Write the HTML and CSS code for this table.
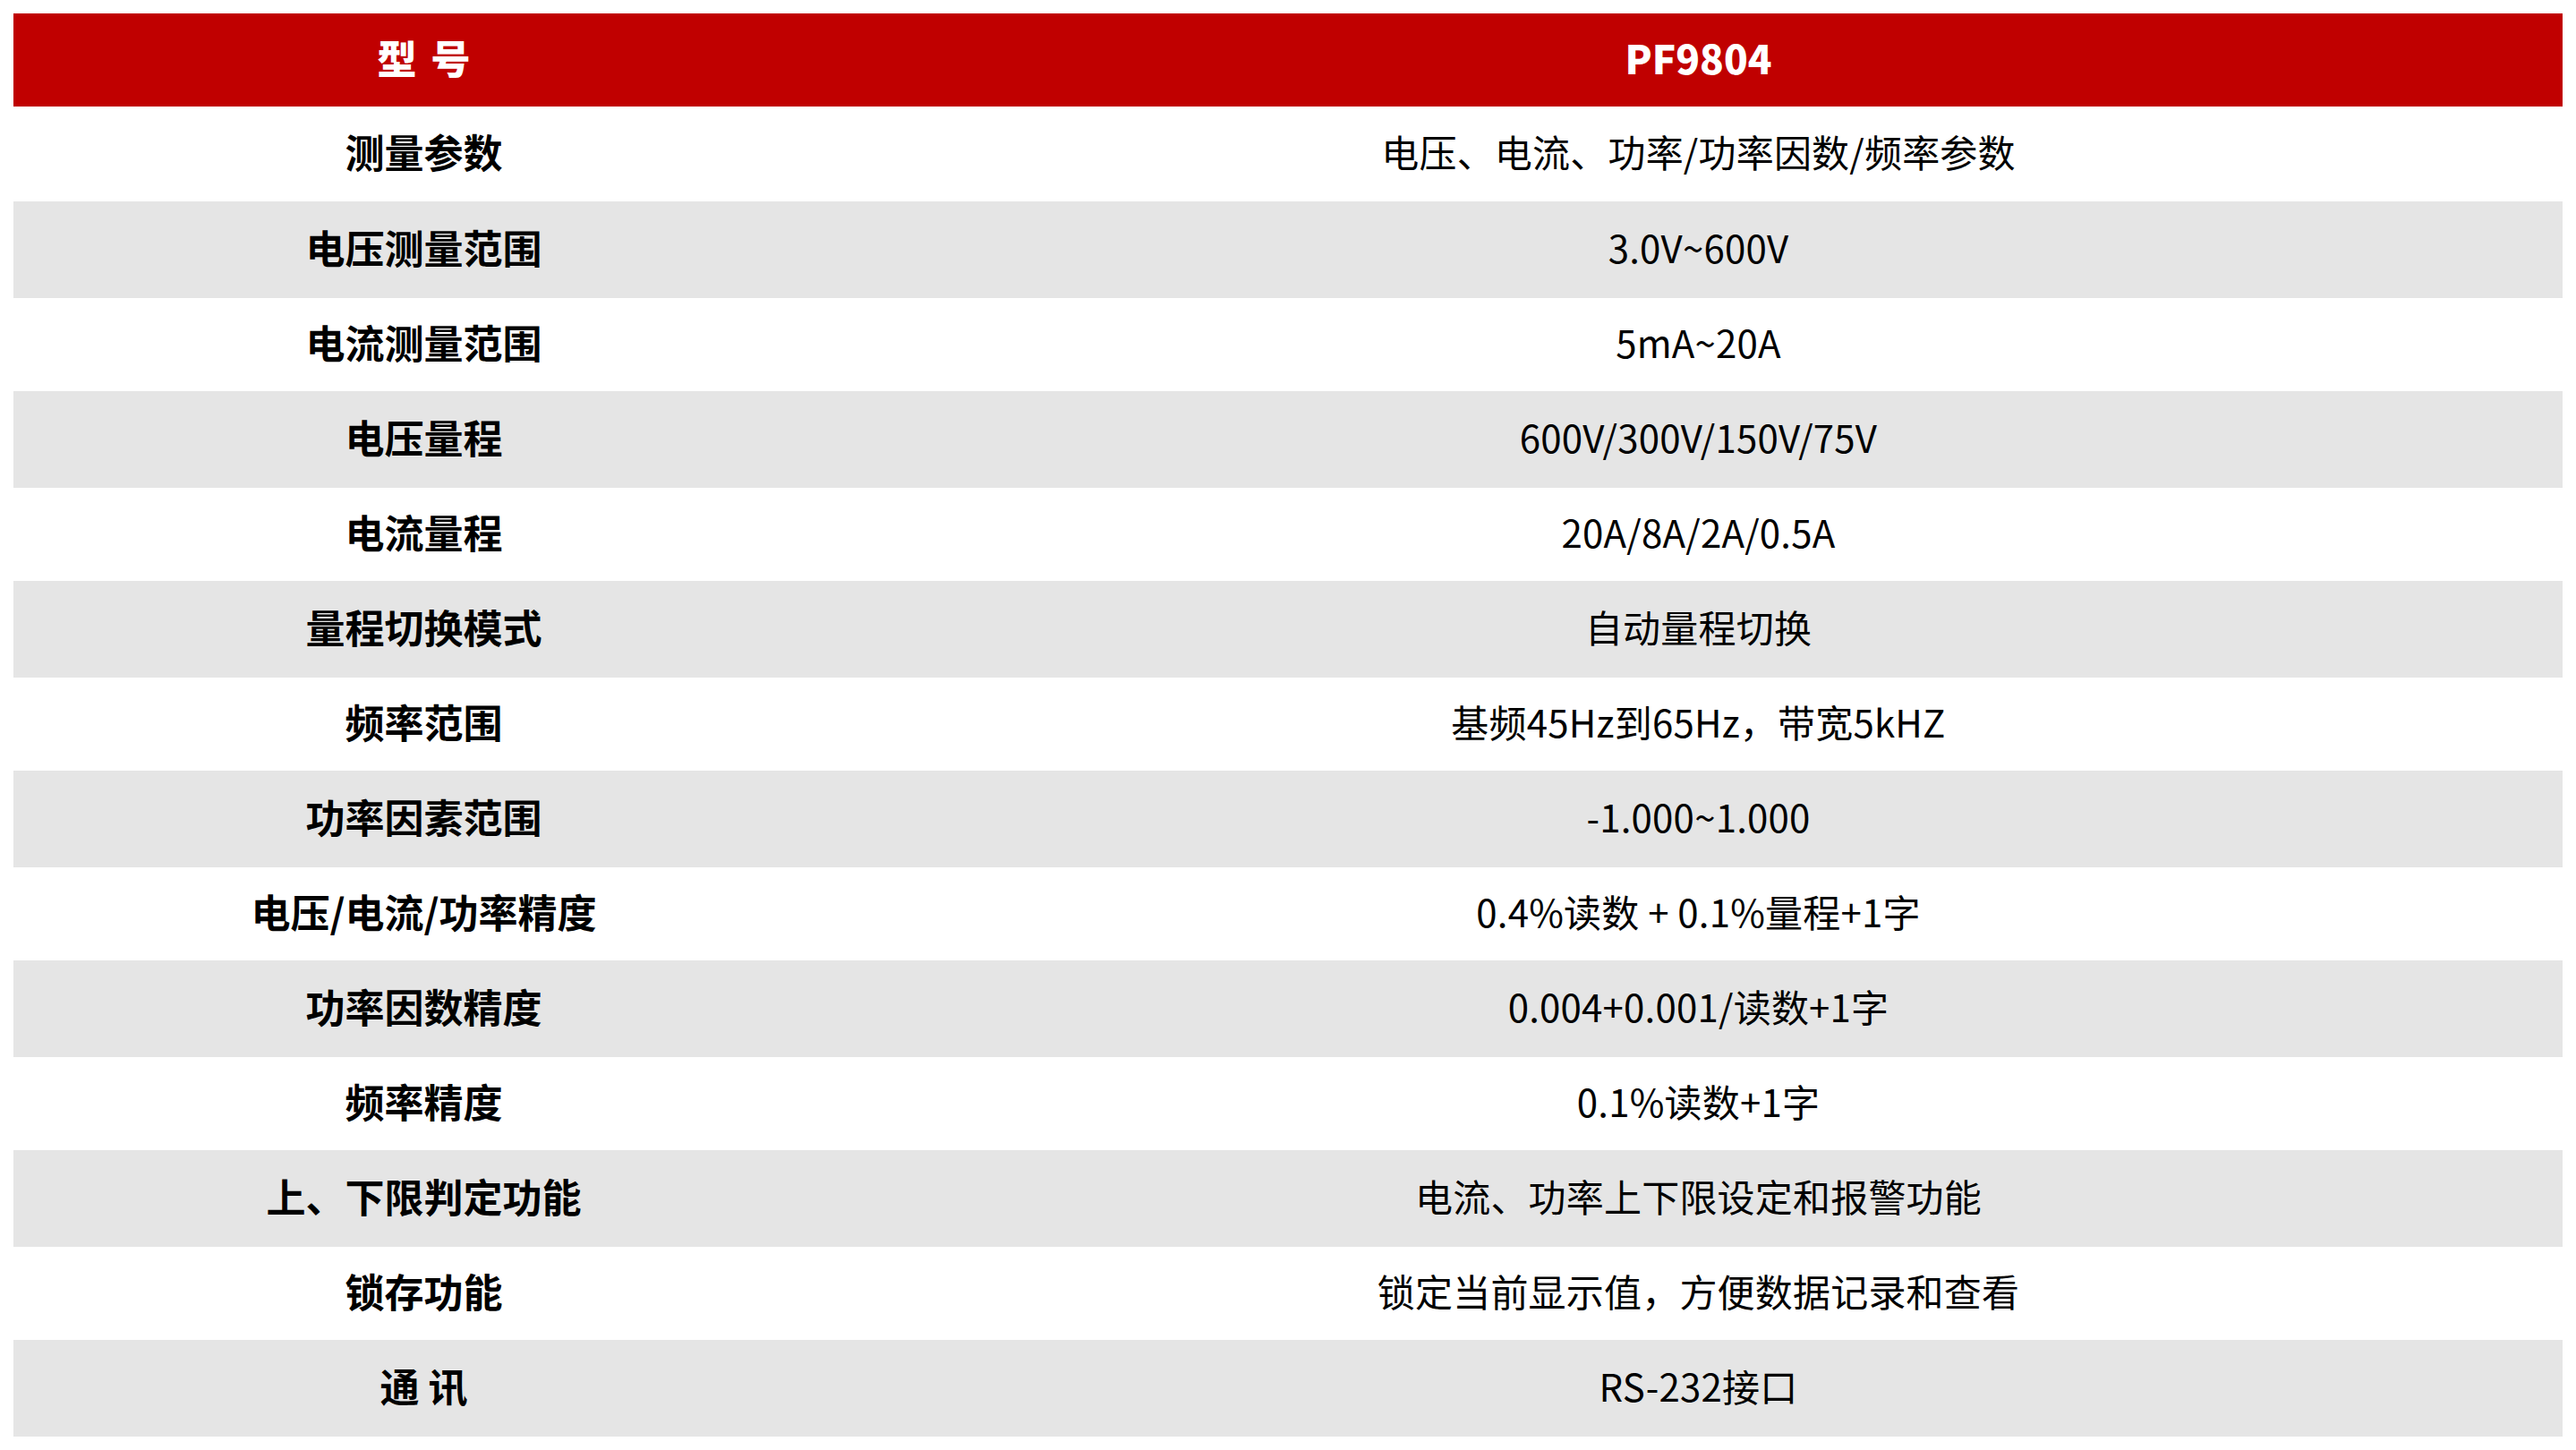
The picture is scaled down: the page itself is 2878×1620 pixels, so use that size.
FILE: index.html
```html
<!DOCTYPE html>
<html lang="zh-CN">
<head>
<meta charset="utf-8">
<title>PF9804 参数</title>
<link rel="stylesheet" href="styles.css">
</head>
<body>
<table class="spec">
  <colgroup>
    <col class="col-name">
    <col class="col-value">
  </colgroup>
  <thead>
    <tr class="head">
      <th class="name">型 号</th>
      <th class="value">PF9804</th>
    </tr>
  </thead>
  <tbody>
    <tr class="row first"><td class="name">测量参数</td><td class="value">电压、电流、功率/功率因数/频率参数</td></tr>
    <tr class="row alt"><td class="name">电压测量范围</td><td class="value">3.0V~600V</td></tr>
    <tr class="row"><td class="name">电流测量范围</td><td class="value">5mA~20A</td></tr>
    <tr class="row alt"><td class="name">电压量程</td><td class="value">600V/300V/150V/75V</td></tr>
    <tr class="row"><td class="name">电流量程</td><td class="value">20A/8A/2A/0.5A</td></tr>
    <tr class="row alt"><td class="name">量程切换模式</td><td class="value">自动量程切换</td></tr>
    <tr class="row"><td class="name">频率范围</td><td class="value">基频45Hz到65Hz，带宽5kHZ</td></tr>
    <tr class="row alt"><td class="name">功率因素范围</td><td class="value">-1.000~1.000</td></tr>
    <tr class="row"><td class="name">电压/电流/功率精度</td><td class="value">0.4%读数 + 0.1%量程+1字</td></tr>
    <tr class="row alt"><td class="name">功率因数精度</td><td class="value">0.004+0.001/读数+1字</td></tr>
    <tr class="row"><td class="name">频率精度</td><td class="value">0.1%读数+1字</td></tr>
    <tr class="row alt"><td class="name">上、下限判定功能</td><td class="value">电流、功率上下限设定和报警功能</td></tr>
    <tr class="row"><td class="name">锁存功能</td><td class="value">锁定当前显示值，方便数据记录和查看</td></tr>
    <tr class="row alt"><td class="name">通 讯</td><td class="value">RS-232接口</td></tr>
  </tbody>
</table>
</body>
</html>
```

FILE: styles.css
```css
html, body {
  background: #ffffff;
}

body {
  margin: 15px;
  font-family: "Noto Sans CJK SC", "Noto Sans", sans-serif;
  color: #000000;
}

.spec {
  width: 100%;
  border-collapse: collapse;
  border-spacing: 0;
  table-layout: fixed;
}

.col-name {
  width: 917px;
}

.spec th,
.spec td {
  padding: 0 0 6px 0;
  text-align: center;
  vertical-align: middle;
  font-size: 44px;
  line-height: 1;
  white-space: nowrap;
}

.head {
  height: 104px;
  background: #c00000;
  color: #ffffff;
}

.head th {
  font-weight: 900;
}

.head th.name {
  word-spacing: 6px;
}

.row {
  height: 104px;
  background: #ffffff;
}

.row.first {
  height: 106px;
}

.row.alt {
  height: 108px;
  background: #e5e5e5;
}

.row .name {
  font-weight: 700;
}

.row .value {
  font-weight: 400;
  font-size: 42px;
  letter-spacing: 0.2px;
}
```
